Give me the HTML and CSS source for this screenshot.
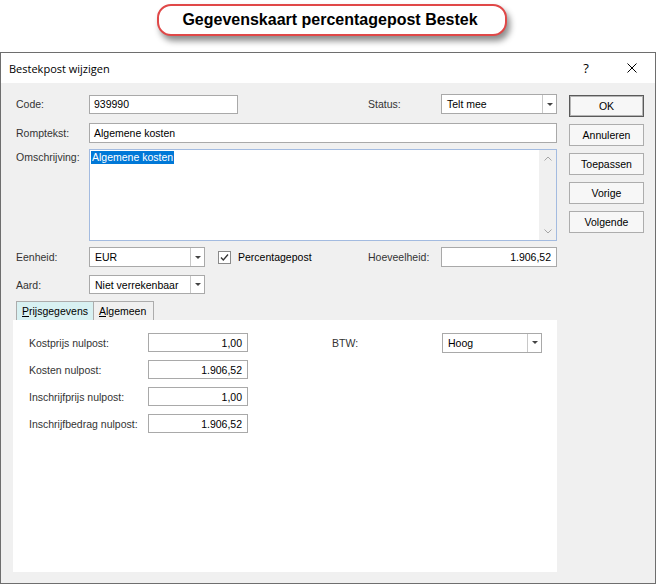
FILE: index.html
```html
<!DOCTYPE html>
<html lang="nl">
<head>
<meta charset="utf-8">
<title>Bestekpost wijzigen</title>
<link rel="stylesheet" href="styles.css">
</head>
<body>
<div class="page">
  <div class="banner">
    <div class="callout">Gegevenskaart percentagepost Bestek</div>
  </div>
  <div class="dialog">
    <div class="titlebar">
      <span class="title">Bestekpost wijzigen</span>
      <span class="tbtn help">?</span>
      <span class="tbtn close">
        <svg width="10" height="10" viewBox="0 0 10 10"><path d="M0.5 0.5 L9.5 9.5 M9.5 0.5 L0.5 9.5" stroke="#000" stroke-width="1" fill="none"/></svg>
      </span>
    </div>
    <div class="content">
      <div class="main">
        <div class="row r1">
          <span class="lbl">Code:</span>
          <div class="field w-code">939990</div>
          <span class="lbl lbl-r">Status:</span>
          <div class="combo w-right"><span class="cv">Telt mee</span><span class="dd"></span></div>
        </div>
        <div class="row r2">
          <span class="lbl">Romptekst:</span>
          <div class="field grow">Algemene kosten</div>
        </div>
        <div class="row r3">
          <span class="lbl lbl-top">Omschrijving:</span>
          <div class="memo">
            <div class="memo-text"><span class="sel">Algemene kosten</span></div>
            <div class="memo-scroll">
              <span class="sbtn"><svg width="8" height="5" viewBox="0 0 8 5"><polyline points="0.5,4.5 4,1 7.5,4.5" stroke="#a6a6a6" fill="none"/></svg></span>
              <span class="sbtn"><svg width="8" height="5" viewBox="0 0 8 5"><polyline points="0.5,0.5 4,4 7.5,0.5" stroke="#a6a6a6" fill="none"/></svg></span>
            </div>
          </div>
        </div>
        <div class="row r4">
          <span class="lbl">Eenheid:</span>
          <div class="combo w-combo"><span class="cv">EUR</span><span class="dd"></span></div>
          <span class="chk"><svg width="11" height="11" viewBox="0 0 11 11"><polyline points="2,5.5 4.3,8 9,2.5" stroke="#333" stroke-width="1.3" fill="none"/></svg></span>
          <span class="chklbl">Percentagepost</span>
          <span class="lbl lbl-r">Hoeveelheid:</span>
          <div class="field num w-right">1.906,52</div>
        </div>
        <div class="row r5">
          <span class="lbl">Aard:</span>
          <div class="combo w-combo"><span class="cv">Niet verrekenbaar</span><span class="dd"></span></div>
        </div>
        <div class="tabs">
          <span class="tab active"><span><u>P</u>rijsgegevens</span></span>
          <span class="tab"><span><u>A</u>lgemeen</span></span>
        </div>
        <div class="panel">
          <div class="prow">
            <span class="plbl">Kostprijs nulpost:</span>
            <div class="field num pw">1,00</div>
            <span class="plbl2">BTW:</span>
            <div class="combo pcw"><span class="cv">Hoog</span><span class="dd"></span></div>
          </div>
          <div class="prow">
            <span class="plbl">Kosten nulpost:</span>
            <div class="field num pw">1.906,52</div>
          </div>
          <div class="prow">
            <span class="plbl">Inschrijfprijs nulpost:</span>
            <div class="field num pw">1,00</div>
          </div>
          <div class="prow">
            <span class="plbl">Inschrijfbedrag nulpost:</span>
            <div class="field num pw">1.906,52</div>
          </div>
        </div>
      </div>
      <div class="buttons">
        <span class="btn default">OK</span>
        <span class="btn">Annuleren</span>
        <span class="btn">Toepassen</span>
        <span class="btn">Vorige</span>
        <span class="btn">Volgende</span>
      </div>
    </div>
  </div>
</div>
</body>
</html>
```
FILE: styles.css
```css
* { box-sizing: border-box; }
html, body { margin: 0; padding: 0; background: #fff; }
body { font-family: "Liberation Sans", Arial, sans-serif; color: #000; }

.page { width: 657px; height: 584px; overflow: hidden; }

.banner { height: 52px; padding-top: 4px; }
.callout {
  margin-left: 157px;
  width: 350px;
  height: 32px;
  border: 2px solid #e04848;
  border-radius: 14px;
  background: #fff;
  box-shadow: 3px 5px 6px rgba(0, 0, 0, 0.45);
  font-weight: bold;
  font-size: 16px;
  display: flex;
  align-items: center;
  justify-content: center;
  padding-right: 4px;
}

.dialog {
  width: 656px;
  height: 532px;
  border: 1px solid #6e6e6e;
  background: #f0f0f0;
  display: flex;
  flex-direction: column;
}
.titlebar {
  height: 30px;
  background: #fff;
  display: flex;
  align-items: center;
  font-family: "Open Sans", "Noto Sans", sans-serif;
  font-size: 11px;
}
.title { flex: 1; padding-left: 8px; }
.tbtn { width: 46px; height: 30px; display: flex; align-items: center; justify-content: center; }
.help { font-size: 13px; }

.content { flex: 1; display: flex; padding: 11px 0 0 12px; }
.main { width: 544px; display: flex; flex-direction: column; }

.row { display: flex; align-items: center; height: 20px; font-size: 10.5px; }
.r2 { margin-top: 9px; }
.r3 { margin-top: 6px; height: 92px; align-items: flex-start; }
.r4 { margin-top: 6px; }
.r5 { margin-top: 8px; height: 19px; }

.lbl { width: 76px; padding-left: 3px; color: #333; flex: none; }
.lbl-top { padding-top: 2px; line-height: 13px; }
.lbl-r { margin-left: auto; width: 73px; padding-left: 0; }

.field {
  height: 100%;
  border: 1px solid #a9a9a9;
  background: #fff;
  padding: 0 4px;
  display: flex;
  align-items: center;
  color: #000;
  flex: none;
}
.grow { flex: 1; }
.num { justify-content: flex-end; padding-right: 5px; }
.w-code { width: 149px; height: 19px; }
.w-right { width: 116px; }
.w-combo { width: 116px; }

.combo {
  height: 100%;
  border: 1px solid #a9a9a9;
  background: #fff;
  display: flex;
  flex: none;
}
.combo .cv { flex: 1; padding-left: 5px; display: flex; align-items: center; color: #000; white-space: nowrap; }
.combo .dd {
  width: 14px;
  border-left: 1px solid #c8c8c8;
  display: flex;
  align-items: center;
  justify-content: center;
}
.combo .dd::after {
  content: "";
  border-left: 3px solid transparent;
  border-right: 3px solid transparent;
  border-top: 3px solid #444;
}

.memo {
  flex: 1;
  height: 92px;
  border: 1px solid #a3bbe0;
  background: #fff;
  display: flex;
}
.memo-text { flex: 1; padding: 1px 0 0 1px; }
.sel { display: inline-block; background: #0078d7; color: #fff; line-height: 13px; padding: 0 1px; }
.memo-scroll { width: 17px; background: #f0f0f0; display: flex; flex-direction: column; justify-content: space-between; }
.sbtn { height: 17px; display: flex; align-items: center; justify-content: center; }

.chk {
  margin-left: 13px;
  width: 13px;
  height: 13px;
  border: 1px solid #8a8a8a;
  background: #fff;
  display: flex;
  align-items: center;
  justify-content: center;
  flex: none;
}
.chklbl { margin-left: 7px; color: #000; }

.tabs { margin-top: 7px; height: 19px; display: flex; padding-left: 3px; font-size: 10.5px; }
.tab {
  border: 1px solid #acacac;
  border-bottom: none;
  background: #f0f0f0;
  display: flex;
  align-items: center;
  padding-left: 5px;
  width: 61px;
  color: #000;
}
.tab.active { background: #d8f1f2; width: 78px; }
.tab + .tab { border-left: none; width: 60px; }

.panel {
  height: 252px;
  background: #fff;
  padding: 13px 0 0 16px;
  font-size: 10.5px;
}
.prow { display: flex; align-items: center; height: 19px; }
.prow + .prow { margin-top: 8px; }
.plbl { width: 119px; color: #333; flex: none; }
.pw { width: 100px; }
.plbl2 { margin-left: 84px; width: 110px; color: #333; }
.pcw { width: 100px; height: 20px; }

.buttons { margin-left: 12px; margin-top: 1px; width: 75px; display: flex; flex-direction: column; gap: 7px; }
.btn {
  height: 22px;
  border: 1px solid #adadad;
  background: #f7f7f7;
  display: flex;
  align-items: center;
  justify-content: center;
  font-size: 10.5px;
  color: #000;
}
.btn.default { border-color: #5a5a5a; box-shadow: inset 0 0 0 1px #b5b5b5; }
```
